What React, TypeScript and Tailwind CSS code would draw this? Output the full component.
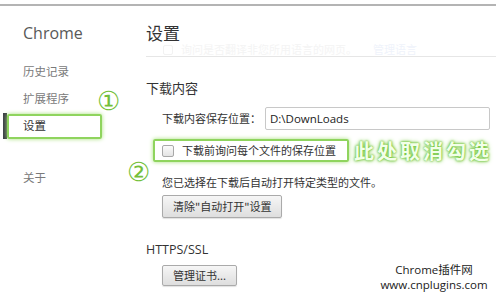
const cjk = "font-['Noto_Sans_CJK_SC','Noto_Sans',sans-serif]";

function SideItem({ label, active }: { label: string; active?: boolean }) {
  if (active) {
    return (
      <div className="flex h-[26px] items-center">
        <div className="ml-[3px] h-[26px] w-[4px] bg-[#3c3f46]" />
        <div className="flex h-[25px] w-[95px] items-center rounded-[2px] border-2 border-[#8fd45e] pl-[14px] text-[11.5px] text-[#333] shadow-[0_0_4px_#a6e07a]">
          {label}
        </div>
      </div>
    );
  }
  return (
    <div className="flex h-[27px] items-center pl-[23px] text-[11.5px] text-[#7a7a7a]">{label}</div>
  );
}

function Button({ label, h }: { label: string; h: string }) {
  return (
    <button
      type="button"
      className={`${h} whitespace-nowrap rounded-[2px] border border-[#aaa] bg-gradient-to-b from-[#f6f6f6] to-[#dedede] px-[10px] text-[11px] text-[#333] shadow-[0_1px_1px_rgba(0,0,0,0.12)]`}
    >
      {label}
    </button>
  );
}

export default function App() {
  return (
    <div className={`relative h-[294px] w-[496px] overflow-hidden bg-white ${cjk}`}>
      <div className="h-[4px]" />
      <div className="h-[2px] bg-[#b4b4b4]" />

      <div className="flex">
        <aside className="w-[146px] shrink-0 pt-[16px]">
          <div className="pl-[23px] font-['Open_Sans',sans-serif] text-[16px] leading-[22px] text-[#595959]">
            Chrome
          </div>
          <div className="mt-[14px] flex flex-col">
            <SideItem label="历史记录" />
            <SideItem label="扩展程序" />
            <div className="mt-[1px]">
              <SideItem label="设置" active />
            </div>
            <div className="mt-[25px]">
              <SideItem label="关于" />
            </div>
          </div>
        </aside>

        <main className="flex-1">
          <div className="mt-[16px] h-[22px] text-[17px] leading-[22px] text-[#333]">设置</div>
          <div className="flex h-[11px] items-center gap-[8px] pl-[17px] text-[11px] text-[#f4f4f4]">
            <span className="h-[10px] w-[10px] rounded-[2px] border border-[#f2f2f2]" />
            <span>询问是否翻译非您所用语言的网页。</span>
            <span className="ml-[8px] text-[#eff3fb]">管理语言</span>
          </div>
          <div className="mt-[1px] h-px bg-[#e6e6e6]" />

          <div className="mt-[23px] h-[16px] text-[13px] leading-[16px] text-[#333]">下载内容</div>

          <div className="mt-[11px] flex h-[23px] items-center whitespace-nowrap pl-[16px] text-[11px] text-[#333]">
            <span className="w-[103px]">下载内容保存位置：</span>
            <div className="flex h-[23px] w-[225px] items-center rounded-[2px] border border-[#c8c8c8] pl-[4px] font-['Open_Sans',sans-serif] text-[11.5px] text-[#222]">
              D:\DownLoads
            </div>
          </div>

          <div className="mt-[9px] flex h-[23px] items-center">
            <div className="ml-[7px] flex h-[23px] w-[196px] items-center whitespace-nowrap rounded-[2px] border-2 border-[#8fd45e] pl-[7px] text-[11px] text-[#333] shadow-[0_0_4px_#a6e07a]">
              <span className="h-[12px] w-[12px] rounded-[2px] border border-[#a8a8a8] bg-gradient-to-b from-[#fbfbfb] to-[#e4e4e4]" />
              <span className="ml-[8px]">下载前询问每个文件的保存位置</span>
            </div>
            <span className="ml-[5px] whitespace-nowrap text-[20px] font-bold leading-[23px] tracking-[3px] text-[#f2ffe8] [text-shadow:0_0_2px_#6fc43a,0_0_3px_#6fc43a,0_0_5px_#8fd45e]">
              此处取消勾选
            </span>
          </div>

          <div className="mt-[12px] h-[16px] whitespace-nowrap pl-[16px] text-[11px] leading-[16px] text-[#333]">
            您已选择在下载后自动打开特定类型的文件。
          </div>
          <div className="mt-[5px] flex pl-[16px]">
            <Button label={'清除"自动打开"设置'} h="h-[23px]" />
          </div>

          <div className="mt-[24px] h-[16px] font-['Open_Sans',sans-serif] text-[12.5px] leading-[16px] text-[#333]">
            HTTPS/SSL
          </div>
          <div className="mt-[7px] flex pl-[16px]">
            <Button label="管理证书..." h="h-[21px]" />
          </div>
        </main>
      </div>

      <span className="absolute left-[97px] top-[87px] font-['DejaVu_Serif',serif] text-[26px] leading-[28px] text-[#74bf3a]">①</span>
      <span className="absolute left-[127px] top-[158px] font-['DejaVu_Serif',serif] text-[26px] leading-[28px] text-[#74bf3a]">②</span>

      <div className="absolute right-[6px] top-[262px] flex w-[112px] flex-col items-center font-['Open_Sans','Noto_Sans_CJK_SC',sans-serif] text-[11.5px] text-[#222]">
        <div className="h-[15px] leading-[15px]">Chrome插件网</div>
        <div className="h-[15px] leading-[15px]">www.cnplugins.com</div>
      </div>
    </div>
  );
}
